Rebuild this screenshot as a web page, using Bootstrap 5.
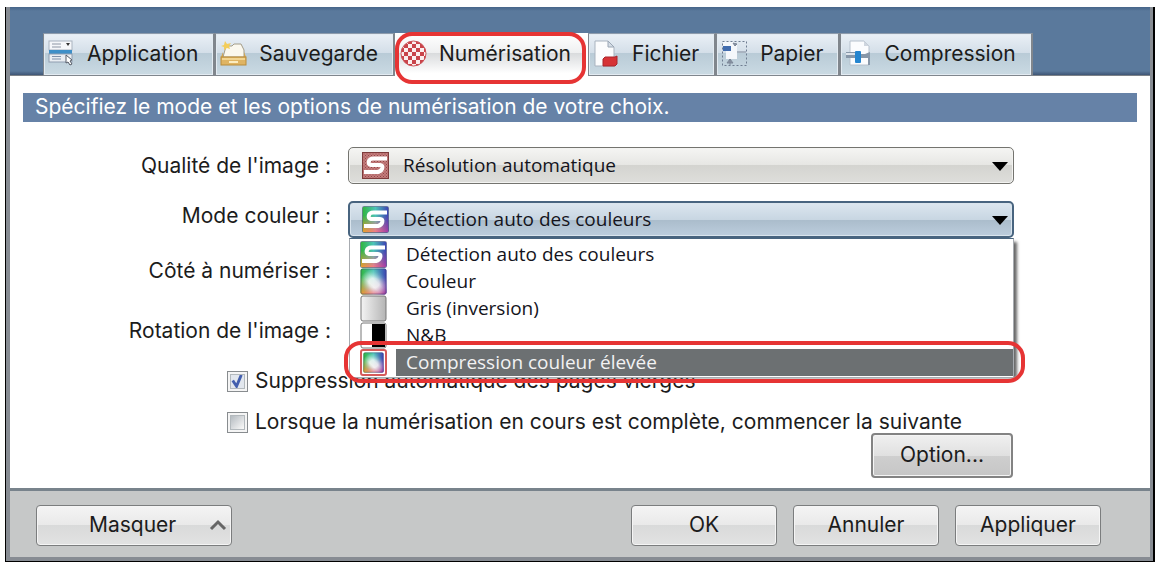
<!DOCTYPE html>
<html lang="fr">
<head>
<meta charset="utf-8">
<meta name="viewport" content="width=device-width, initial-scale=1">
<title>Numérisation</title>
<link rel="stylesheet" href="https://cdn.jsdelivr.net/npm/bootstrap@5.3.0/dist/css/bootstrap.min.css">
<style>
  body { font-family: Inter, "Liberation Sans", sans-serif; font-size: 21px; line-height: 28px; color: #1c1c1c; background: #fff; }
  .window { margin: 7px 2px 0 5px; min-height: calc(100vh - 7px); border: solid #000; border-width: 0 2px 2px 1px; }
  .frame { border: solid #878c93; border-width: 0 3px 4px 4px; }

  /* tab strip */
  .strip { background: linear-gradient(#46658a 0, #5a799c 4px, #5a799c calc(100% - 5px), #3f5676 calc(100% - 1px), #7d8288 calc(100% - 1px)); padding: 26px 24px 0 33px; }
  .strip .nav-item { position: relative; }
  .strip .nav-link { height: 43px; padding: 0 15px 2px 4px; gap: 12px; border: 1px solid #80868d; border-right-width: 2px; border-top-color: #8d9bac; border-radius: 0; margin: 0; color: #1c1c1c;
    background: linear-gradient(#eaf0f6 0, #d3dee8 47%, #b9cbd7 47%, #c9d9e2 96%); box-shadow: inset 0 0 0 1px #e3ebf2; }
  .strip .nav-link.active { color: #1c1c1c; border-color: #fff; background: linear-gradient(#fff 0, #eeeff0 47%, #d9dbdd 47%, #fff 96%); box-shadow: none; }
  .strip svg { width: 27px; height: 27px; flex: none; }
  .ring { position: absolute; border: 4px solid #e63434; border-radius: 17px; pointer-events: none; z-index: 5; }
  .ring-tab { inset: -1px 2px -8px 0; }
  .ring-item { inset: -8px -12px -7px -6px; }

  /* page */
  .sheet { flex: 1 0 auto; padding: 17px 13px 10px 13px; }
  .intro { background: #6682a7; color: #fff; padding: 0 12px; height: 29px; margin: 0 0 25px; font-size: 21px; line-height: 28px; font-weight: 400; }
  .fields { display: grid; grid-template-columns: 308px minmax(0, 1fr); grid-template-rows: 37px 37px 31px 56px; column-gap: 17px; row-gap: 17px; margin-right: 123px; }
  .fields > label { text-align: right; align-self: center; }
  .fields > label.raised { align-self: start; padding-top: 1px; }
  .combo { position: relative; align-self: center; }
  .combo select { height: 37px; padding: 0 40px 2px 54px; border: 1px solid #74746f; border-radius: 5px; color: #14141c; font: 19px/32px "Open Sans", "Noto Sans", sans-serif;
    background: linear-gradient(#f5f5f3 0, #e6e6e3 50%, #d4d4d0 50%, #dededb 100%); box-shadow: inset 0 0 0 1px #f3f3f1; }
  .combo select.opened { border: 2px solid #48647f; padding-left: 53px; background: linear-gradient(#dce6ef 0, #c8d6e2 50%, #aabccb 50%, #bccddd 100%); box-shadow: inset 0 0 0 1px #d9e4ed; }
  .combo-slim { margin: 0 3px; }
  .combo-slim select { height: 31px; }
  .combo > svg { position: absolute; top: 5px; left: 14px; width: 27px; height: 27px; pointer-events: none; }
  .combo > svg.arrow { top: 15px; left: auto; right: 6px; width: 16px; height: 9px; }
  .choices { position: absolute; top: 37px; left: 1px; right: 0; z-index: 3; margin: 0; padding: 2px 0 1px; background: #fff; border: 1px solid #a7abb0; border-top: 1px solid #48647f;
    box-shadow: 5px 2px 3px -2px #666; font: 19px/26px "Open Sans", "Noto Sans", sans-serif; color: #14141c; }
  .choices li { position: relative; display: flex; height: 27px; padding-left: 10px; gap: 9px; }
  .choices svg { width: 27px; height: 27px; flex: none; }
  .choices span { flex: 1; padding-left: 10px; }
  .choices .picked span { background: #6c7072; color: #f2f2f2; }

  .ticks { padding: 11px 0 0 204px; }
  .ticks .form-check { min-height: 0; margin: 0; padding: 0; display: flex; gap: 7px; align-items: center; line-height: 22px; }
  .ticks .form-check + .form-check { margin-top: 19px; }
  .ticks .form-check-input { float: none; flex: none; width: 21px; height: 21px; margin: 0; border: 1px solid #888c8f; border-radius: 0; background-color: #c5c9cb; background-size: 100% 100%;
    background-image: linear-gradient(135deg, #b9bfc4 20%, #f7f7f7 80%); box-shadow: inset 0 0 0 2px #f5f5f5, inset 0 0 0 3px #b3b9bd; }
  .ticks .form-check-input:checked { border-color: #888c8f; background-image: url("data:image/svg+xml,%3csvg xmlns='http://www.w3.org/2000/svg' viewBox='0 0 20 20'%3e%3cpath fill='%23e2e7ee' d='M3 3h14v14H3z'/%3e%3cpath fill='none' stroke='%23435fae' stroke-width='3' d='M5 9l4 6 5-12'/%3e%3c/svg%3e"); }

  .push { color: #1c1c1c; font-size: 21px; line-height: 28px; width: 146px; height: 41px; padding: 0 0 2px; border: 1px solid #7b7d7e; border-radius: 4px; background: linear-gradient(#f4f4f4 0, #e9e9e9 50%, #d9dada 50%, #e2e2e2 100%); box-shadow: inset 0 0 0 1px #f5f5f5; }
  .push-option { width: 142px; height: 45px; border: 2px solid #838383; margin-right: 124px; background: linear-gradient(#f0f0f0 0, #e0e0e0 50%, #cfcfcf 50%, #c6c6c6 100%); }
  .push-fold { width: 196px; padding-left: 52px; padding-right: 4px; }
  .push-fold svg { width: 18px; height: 12px; }
  .bottom { background: #c6c8c8; border-top: 3px solid #78838c; padding: 14px 49px 11px 26px; }
</style>
</head>
<body>
<svg width="0" height="0" class="position-absolute" aria-hidden="true">
  <defs>
    <linearGradient id="hue" x1="0" y1="0" x2="1" y2="0"><stop offset="0" stop-color="#2fb53c"/><stop offset=".5" stop-color="#4cc4b8"/><stop offset="1" stop-color="#3b3fb4"/></linearGradient>
    <linearGradient id="hue2" x1="0" y1="0" x2="1" y2="0"><stop offset="0" stop-color="#e9a02c"/><stop offset=".5" stop-color="#f27a86"/><stop offset="1" stop-color="#a03aa8"/></linearGradient>
    <linearGradient id="down" x1="0" y1="0" x2="0" y2="1"><stop offset=".35" stop-color="#000"/><stop offset=".95" stop-color="#fff"/></linearGradient>
    <mask id="low"><rect width="27" height="27" fill="url(#down)"/></mask>
    <linearGradient id="glow" x1="0" y1="1" x2="1" y2="0"><stop offset=".1" stop-color="#fff" stop-opacity="0"/><stop offset=".4" stop-color="#fff" stop-opacity=".85"/><stop offset=".55" stop-color="#fff" stop-opacity=".8"/><stop offset=".85" stop-color="#fff" stop-opacity="0"/></linearGradient>
    <radialGradient id="spot"><stop offset=".35" stop-color="#fff"/><stop offset="1" stop-color="#000"/></radialGradient>
    <mask id="middle"><ellipse cx="14" cy="15" rx="15" ry="14" fill="url(#spot)"/></mask>
    <linearGradient id="silver"><stop offset="0" stop-color="#f4f4f4"/><stop offset="1" stop-color="#b4b4b4"/></linearGradient>
    <pattern id="weave" width="3" height="3" patternUnits="userSpaceOnUse"><rect width="3" height="3" fill="#c47c7c"/><path d="M0 0h1v1H0zM1.500 1.500h1v1h-1z" fill="#914848"/></pattern>
    <pattern id="check" width="8" height="8" patternUnits="userSpaceOnUse"><rect width="8" height="8" fill="#fbeeee"/><path d="M0 0h4v4H0zM4 4h4v4H4z" fill="#c9444a"/></pattern>
    <symbol id="rainbow" viewBox="0 0 27 27"><rect x=".5" y=".5" width="26" height="26" rx="2" fill="url(#hue)"/><rect x=".5" y=".5" width="26" height="26" rx="2" fill="url(#hue2)" mask="url(#low)"/></symbol>
    <symbol id="colour-tile" viewBox="0 0 27 27"><use href="#rainbow"/><rect width="27" height="27" fill="url(#glow)" mask="url(#middle)"/><rect x="1" y="1" width="25" height="25" rx="2" fill="none" stroke="#3c4a70" stroke-opacity=".5"/></symbol>
    <symbol id="ess" viewBox="0 0 27 27"><path d="M25 6.500H11.500Q7.500 6.500 6.800 9.500T9 13H18Q21 13 20.300 16T16 20H2" fill="none" stroke="#fff" stroke-width="4"/></symbol>
    <symbol id="auto" viewBox="0 0 27 27"><use href="#rainbow"/><use href="#ess"/><rect x=".5" y=".5" width="26" height="26" rx="1" fill="none" stroke="#3c4a70" stroke-opacity=".5"/></symbol>
  </defs>
</svg>

<div class="window d-flex flex-column">
<div class="frame d-flex flex-column flex-grow-1">
  <header class="strip">
    <ul class="nav flex-nowrap">
      <li class="nav-item"><a class="nav-link d-flex align-items-center" href="#">
        <svg viewBox="0 0 27 27"><rect x="1" y="1" width="23" height="9" fill="#f5f7fa" stroke="#aab3bf"/><path d="M4 4h9M4 7h9" stroke="#8d96a4"/><path d="M18 3h4l-2 3z" fill="#333"/><rect x="1" y="10" width="23" height="5" fill="#3e8fc8"/><rect x="1" y="14" width="23" height="8" fill="#e9edf2" stroke="#8f9db0"/><path d="M4 16.500h9M4 19h9" stroke="#8092ab"/><path d="M18 15l6 5-2 1 2 3-2 1-2-3-2 1z" fill="#fff" stroke="#555b66"/></svg>
        Application</a></li>
      <li class="nav-item"><a class="nav-link d-flex align-items-center" href="#">
        <svg viewBox="0 0 27 27"><path d="M5 10l1-4h6l2-2h7l3 6v7H3z" fill="#fbf8ee" stroke="#a39c88"/><path d="M3 12L1 17v8h25v-8l-2-5v5H3z" fill="#d2a550"/><rect x="1" y="17" width="25" height="8" fill="#dfb463" stroke="#b98c3a"/><path d="M2 18h23v2H2z" fill="#f2d592"/><path d="M9 21h9v2H9z" fill="#fbecc0"/><path d="M1 6l3-1 1-4 2 3 4-1-2 3 1 3-3-1-3 2v-3z" fill="#f3cd5a"/></svg>
        Sauvegarde</a></li>
      <li class="nav-item"><a class="nav-link active d-flex align-items-center" href="#" aria-current="page">
        <svg viewBox="0 0 27 27"><circle cx="13.500" cy="13.500" r="12.500" fill="url(#check)" stroke="#cc5358"/></svg>
        Numérisation</a><i class="ring ring-tab"></i></li>
      <li class="nav-item"><a class="nav-link d-flex align-items-center" href="#">
        <svg viewBox="0 0 27 27"><path d="M2 1h13l6 6v19H2z" fill="#fbfcfd" stroke="#a9b3bf"/><path d="M15 1v6h6z" fill="#d5dde6" stroke="#9aa6b4"/><path d="M10 19l2-2h10l2-1v8l-2 2H10z" fill="#d63336" stroke="#a9262c"/></svg>
        Fichier</a></li>
      <li class="nav-item"><a class="nav-link d-flex align-items-center" href="#">
        <svg viewBox="0 0 27 27"><rect x="1.500" y="1.500" width="24" height="24" fill="none" stroke="#6e7c90" stroke-dasharray="2 2"/><path d="M2 2h11l3 3v14H5V8H2z" fill="#f4f7fb"/><rect x="2" y="6" width="8" height="5" fill="#416cae"/><path d="M12 3l4 1-2 2zM16 12h9M9 19v6M9 19l-3 4h6z" fill="#8a94a4" stroke="#7c8798"/></svg>
        Papier</a></li>
      <li class="nav-item"><a class="nav-link d-flex align-items-center" href="#">
        <svg viewBox="0 0 27 27"><path d="M5 1h14l5 5v19H5z" fill="#fbfcfe" stroke="#b6c0cc"/><path d="M19 1v5h5z" fill="#cfd6df"/><path d="M1 12h10v6H1zM16 14h4l5-2v13h-2v-7h-7z" fill="#8797a9"/><path d="M1 13h10v2H1z" fill="#dfe5ec"/><rect x="10" y="11" width="6" height="12" rx="1" fill="#2585cf"/></svg>
        Compression</a></li>
    </ul>
  </header>

  <main class="sheet d-flex flex-column">
    <h1 class="intro">Spécifiez le mode et les options de numérisation de votre choix.</h1>

    <div class="fields">
      <label for="quality">Qualité de l'image :</label>
      <div class="combo">
        <select class="form-select" id="quality"><option>Résolution automatique</option></select>
        <svg viewBox="0 0 27 27"><rect x=".5" y=".5" width="26" height="26" fill="url(#weave)" stroke="#7d3b3b"/><use href="#ess"/></svg>
        <svg class="arrow" viewBox="0 0 16 9"><path d="M0 0h16L8 9z"/></svg>
      </div>

      <label class="raised" for="colour">Mode couleur :</label>
      <div class="combo">
        <select class="form-select opened" id="colour"><option>Détection auto des couleurs</option></select>
        <svg viewBox="0 0 27 27"><use href="#auto"/></svg>
        <svg class="arrow" viewBox="0 0 16 9"><path d="M0 0h16L8 9z"/></svg>
        <ul class="choices list-unstyled" role="listbox">
          <li role="option"><svg viewBox="0 0 27 27"><use href="#auto"/></svg><span>Détection auto des couleurs</span></li>
          <li role="option"><svg viewBox="0 0 27 27"><use href="#colour-tile"/></svg><span>Couleur</span></li>
          <li role="option"><svg viewBox="0 0 27 27"><rect x="1" y="1" width="25" height="25" rx="2" fill="url(#silver)" stroke="#777"/></svg><span>Gris (inversion)</span></li>
          <li role="option"><svg viewBox="0 0 27 27"><rect x="1" y="1" width="25" height="25" rx="2" fill="#fff" stroke="#777"/><path d="M12 2h13v23H12z"/></svg><span>N&amp;B</span></li>
          <li role="option" class="picked" aria-selected="true"><svg viewBox="0 0 27 27"><rect x="1" y="1" width="25" height="25" rx="2" fill="#fff" stroke="#d65a5a" stroke-width="2"/><use href="#colour-tile" x="3" y="3" width="21" height="21"/></svg><span>Compression couleur élevée</span><i class="ring ring-item"></i></li>
        </ul>
      </div>

      <label for="side">Côté à numériser :</label>
      <div class="combo combo-slim"><select class="form-select" id="side"></select></div>

      <label for="turn">Rotation de l'image :</label>
      <div class="combo combo-slim"><select class="form-select" id="turn"></select></div>
    </div>

    <div class="ticks">
      <div class="form-check"><input class="form-check-input" type="checkbox" id="blank" checked><label for="blank">Suppression automatique des pages vierges</label></div>
      <div class="form-check"><input class="form-check-input" type="checkbox" id="next"><label for="next">Lorsque la numérisation en cours est complète, commencer la suivante</label></div>
    </div>
    <button type="button" class="btn push push-option align-self-end">Option...</button>
  </main>

  <footer class="bottom d-flex">
    <button type="button" class="btn push push-fold d-flex align-items-center justify-content-between me-auto">Masquer
      <svg viewBox="0 0 18 12"><path d="M2 10l7-7 7 7" fill="none" stroke="#666" stroke-width="3"/></svg></button>
    <div class="d-flex gap-3">
      <button type="button" class="btn push">OK</button>
      <button type="button" class="btn push">Annuler</button>
      <button type="button" class="btn push">Appliquer</button>
    </div>
  </footer>
</div>
</div>
<script src="https://cdn.jsdelivr.net/npm/bootstrap@5.3.0/dist/js/bootstrap.bundle.min.js"></script>
</body>
</html>
